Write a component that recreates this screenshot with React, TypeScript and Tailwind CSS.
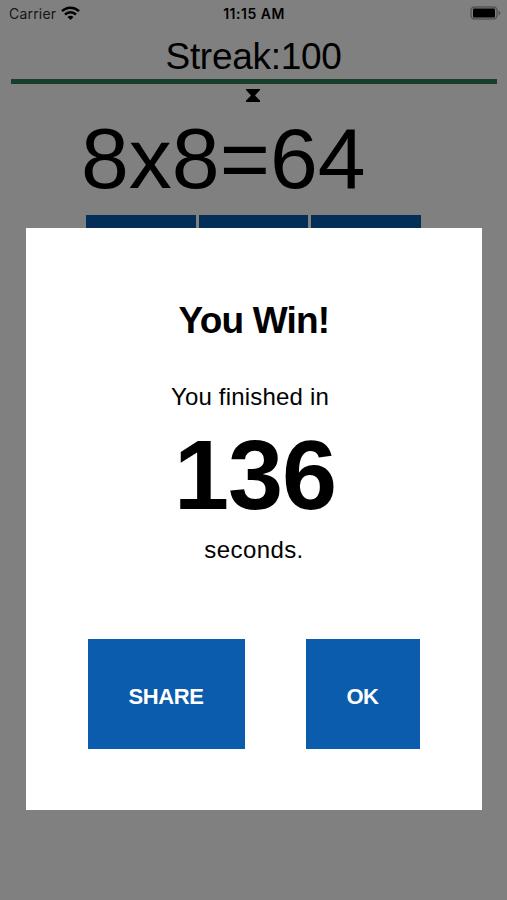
const buttonClass =
  'flex h-[110px] items-center justify-center bg-[#0b5cad] pr-px pt-[5px] text-[22px] font-bold tracking-[-0.4px] text-white'

function StatusBar() {
  return (
    <header className="grid h-7 grid-cols-3 items-center pb-[2px] pl-[9px] pr-[6px] font-['Inter','Liberation_Sans',sans-serif] text-[14px]">
      <div className="flex items-center gap-[5px] text-[#151515]">
        <span className="tracking-[0.2px]">Carrier</span>
        <svg width="19" height="14" viewBox="0 0 19 14" fill="none" stroke="black" strokeWidth="2.500">
          <path d="M1 5.200C5.800 .5 13.200 .5 18 5.200" />
          <path d="M4 8.500c3.200-3 7.800-3 11 0" />
          <path d="M6.500 10.900c1.800-1.500 4.200-1.500 6 0l-3 3Z" fill="black" stroke="none" />
        </svg>
      </div>
      <span className="pr-[2px] text-center font-semibold tracking-[0.500px]">11:15 AM</span>
      <div className="flex justify-end">
        <svg width="31" height="14" viewBox="0 0 31 14" fill="none">
          <rect x="1" y="1" width="26" height="12" rx="3.500" stroke="#555" strokeWidth="1.500" />
          <rect x="3" y="2.500" width="22" height="9" rx="1" fill="black" />
          <path d="M28.500 4.500c2.500 .8 2.500 4.200 0 5Z" fill="#555" />
        </svg>
      </div>
    </header>
  )
}

export default function App() {
  return (
    <div className="relative h-[900px] w-[507px] overflow-hidden bg-[#808080] font-['Liberation_Sans',sans-serif] text-black">
      <StatusBar />
      <main>
        <h1 className="mt-[7px] text-center text-[37px] leading-[44px] tracking-[-0.3px]">Streak:100</h1>
        <div className="ml-[11px] mr-[10px] h-[5px] bg-[#173f2c]" />
        <svg className="ml-[246px] mt-[5px]" width="14" height="13" viewBox="0 0 14 13">
          <path d="M0 0h14v1L9 6.500l5 5v1.500H0v-1.500l5-5L0 1Z" />
        </svg>
        <div className="mt-[6px] pl-[81px] text-[86px] leading-[100px]">8x8=64</div>
        <div className="mx-[86px] mt-[7px] grid grid-cols-3 gap-[3px]">
          <div className="h-[110px] bg-[#032e58]" />
          <div className="h-[110px] bg-[#032e58]" />
          <div className="h-[110px] bg-[#032e58]" />
        </div>
      </main>

      {/* Result dialog */}
      <section role="dialog" className="absolute left-[26px] top-[228px] h-[582px] w-[456px] bg-white text-center">
        <h2 className="mt-[71px] text-[37px] font-bold leading-[44px] tracking-[-0.8px]">You Win!</h2>
        <p className="mt-[39px] pr-[8px] text-[24px] leading-[30px] tracking-[0.2px]">You finished in</p>
        <p className="mt-[11px] pl-[2px] text-[99px] font-bold leading-[104px] tracking-[-1px]">136</p>
        <p className="mt-[8px] text-[24px] leading-[30px] tracking-[0.4px]">seconds.</p>
        <div className="mt-[74px] flex justify-between px-[62px]">
          <button className={`${buttonClass} w-[157px]`}>SHARE</button>
          <button className={`${buttonClass} w-[114px]`}>OK</button>
        </div>
      </section>
    </div>
  )
}
